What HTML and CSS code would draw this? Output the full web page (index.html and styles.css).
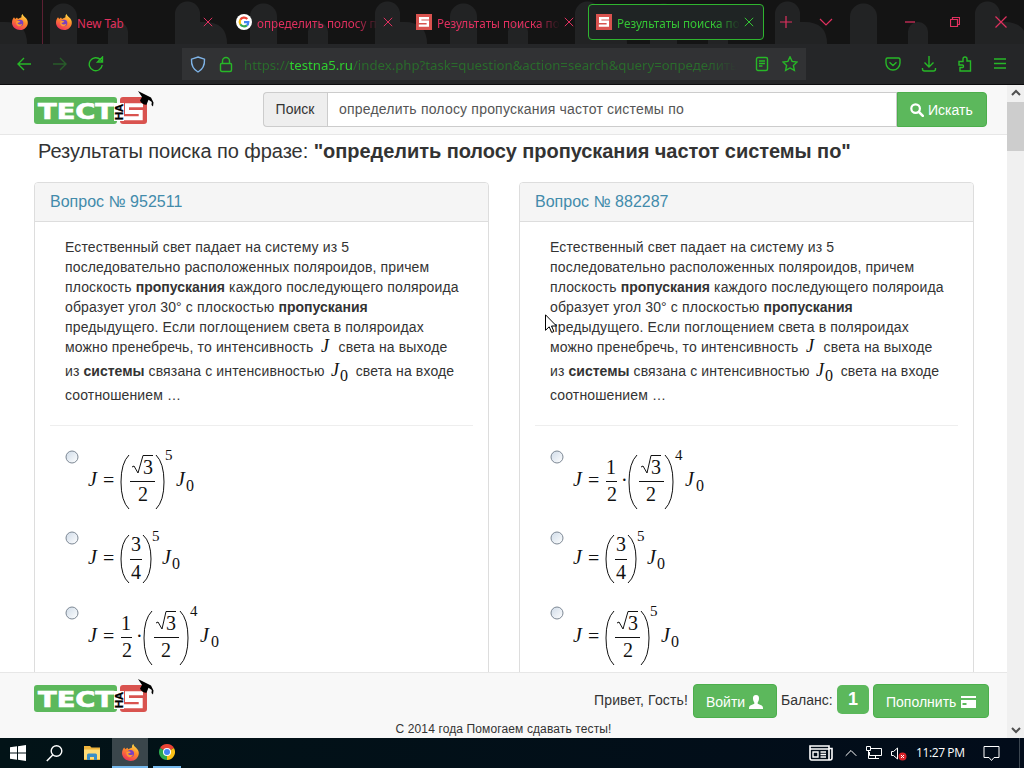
FILE: index.html
```
<!DOCTYPE html>
<html lang="ru">

<head>
  <meta charset="UTF-8">
  <meta name="viewport" content="width=device-width, initial-scale=1.0">
  <title>Результаты поиска</title>
  <link rel="stylesheet" href="styles.css">
</head>

<body>
  <!-- shared icons -->
  <svg class="sprite" width="0" height="0">
    <defs>
      <linearGradient id="fox" x1="0.8" y1="0" x2="0.3" y2="1">
        <stop offset="0" stop-color="#ffe34a"/>
        <stop offset="0.45" stop-color="#ff8a2a"/>
        <stop offset="1" stop-color="#ee2f5c"/>
      </linearGradient>
      <linearGradient id="radio" x1="0" y1="0" x2="1" y2="1">
        <stop offset="0" stop-color="#cfdbe8"/>
        <stop offset="1" stop-color="#ffffff"/>
      </linearGradient>
    </defs>
    <symbol id="firefox" viewBox="0 0 16 16">
      <path d="M2 3.2 3.2 5 5 3.5 6 5C8 3.8 9.3 3.6 9.5 3 9 1.8 10 .6 10.7 0c.2 1.5 1.2 2.2 2.3 3.3C15 5 16 7 15.8 9.2 15.4 13 12.2 16 8.2 16 3.8 16 .3 12.8 0 9 0 6.5.7 4.7 2 3.2z" fill="url(#fox)"/>
      <circle cx="8" cy="9" r="3.3" fill="#7a3fc0"/>
      <path d="M4.2 7.5c1.5-1.2 3-.8 4.2.2-1 .6-1.9 1.2-3 1.2 1 1.7 3.2 2 5 .9-.8 2.1-2.3 2.8-4 2.5C4.6 11.7 3.8 9.5 4.2 7.5z" fill="#ff9a30"/>
    </symbol>
    <symbol id="close" viewBox="0 0 10 10">
      <path d="M.8.8l8.4 8.4M9.2.8.8 9.2" fill="none" stroke="currentColor"/>
    </symbol>
    <symbol id="five" viewBox="0 0 16 16">
      <rect width="16" height="16" fill="#d9534f"/>
      <path d="M13 4.2H4.2v3.6h7.6v3.8H2.8" fill="none" stroke="#fff" stroke-width="2.4"/>
    </symbol>
    <symbol id="logo" viewBox="0 0 122 38">
      <rect x="0" y="6" width="83" height="27" rx="3" fill="#5cb85c"/>
      <rect x="86" y="6" width="27" height="27" rx="3" fill="#d9534f"/>
      <text x="4" y="28" class="logo-name" textLength="76" lengthAdjust="spacingAndGlyphs">ТЕСТ</text>
      <path d="M80 12h10v18H80z" fill="#fff"/>
      <text transform="translate(88.5 29) rotate(-90)" class="logo-on" textLength="16" lengthAdjust="spacingAndGlyphs">НА</text>
      <path d="M109 14.2H93v6.8h13.700v6.200H90" fill="none" stroke="#fff" stroke-width="4"/>
      <path d="M104 0l13 6.5 2.500 5-.5 4-1.500-1.500.3-3-3.300-2.200-2 5c-3 .2-5.500-1.800-6.500-4.300l2-3.500z" fill="#000"/>
    </symbol>
  </svg>

  <div class="tab-bar">
    <svg class="theme" width="1024" height="44">
      <defs>
        <pattern id="humps" width="200" height="44" patternUnits="userSpaceOnUse">
          <path d="M0 44V22h4q23 0 23 22zM50 44V17a13 13 0 0 1 27 0v27zM108 44V32a10 10 0 0 1 20 0v12zM175 44V14a12.5 12.5 0 0 1 25 0v30z" fill="#222324"/>
        </pattern>
      </defs>
      <rect width="1024" height="44" fill="url(#humps)"/>
    </svg>
    <div class="pinned"><svg width="16" height="16"><use href="#firefox"/></svg></div>
    <div class="tab">
      <svg width="16" height="16"><use href="#firefox"/></svg>
      <span class="tab-title">New Tab</span>
      <svg width="10" height="10"><use href="#close"/></svg>
    </div>
    <div class="tab">
      <svg width="16" height="16" viewBox="0 0 16 16">
        <circle cx="8" cy="8" r="8" fill="#fff"/>
        <g fill="none" stroke-width="2.2">
          <path d="M4.3 5.8A4.4 4.4 0 0 1 11.3 4.9" stroke="#ea4335"/>
          <path d="M4.3 10.2a4.4 4.4 0 0 1 0-4.4" stroke="#fbbc05"/>
          <path d="M10.9 11.3a4.4 4.4 0 0 1-6.6-1.1" stroke="#34a853"/>
          <path d="M8 8.2h4.3q0 2-1.4 3.1" stroke="#4285f4"/>
        </g>
      </svg>
      <span class="tab-title fade">определить полосу п</span>
      <svg width="10" height="10"><use href="#close"/></svg>
    </div>
    <div class="tab">
      <svg width="16" height="16"><use href="#five"/></svg>
      <span class="tab-title fade">Результаты поиска по</span>
      <svg width="10" height="10"><use href="#close"/></svg>
    </div>
    <div class="tab active">
      <svg width="16" height="16"><use href="#five"/></svg>
      <span class="tab-title fade">Результаты поиска по</span>
      <svg width="10" height="10"><use href="#close"/></svg>
    </div>
    <div class="tab-tools">
      <svg width="12" height="12" viewBox="0 0 12 12"><path d="M6 0v12M0 6h12"/></svg>
      <svg width="14" height="8" viewBox="0 0 14 8"><path d="M1 1l6 6 6-6"/></svg>
    </div>
    <div class="window-controls">
      <svg width="10" height="10" viewBox="0 0 10 10"><path d="M0 5h10"/></svg>
      <svg width="10" height="10" viewBox="0 0 10 10"><path d="M.5 2.5h7v7h-7zM2.5 2.5v-2h7v7h-2"/></svg>
      <svg width="12" height="12" viewBox="0 0 12 12"><path d="M.5.5l11 11M11.5.5l-11 11"/></svg>
    </div>
  </div>

  <div class="nav-bar">
    <div class="nav-buttons">
      <svg width="16" height="16" viewBox="0 0 16 16"><path d="M15 8H2M8 2 2 8l6 6"/></svg>
      <svg class="dim" width="16" height="16" viewBox="0 0 16 16"><path d="M1 8h13M8 2l6 6-6 6"/></svg>
      <svg width="16" height="16" viewBox="0 0 16 16"><path d="M14.2 9A6.5 6.5 0 1 1 12.5 3.800L14 5.300M14.500 1v5h-5z"/></svg>
    </div>
    <div class="url-bar">
      <svg class="shield" width="16" height="17" viewBox="0 0 16 17"><path d="M8 1l6.5 2.2c.3 5.5-1.500 10-6.500 12.800C3 13.200 1.200 8.700 1.500 3.200z"/></svg>
      <svg width="14" height="17" viewBox="0 0 14 17"><path d="M3.500 7.500V5a3.500 3.500 0 0 1 7 0v2.500M2.500 7.500h9q1 0 1 1V14q0 1.500-1.500 1.500H3q-1.500 0-1.500-1.500V8.500q0-1 1-1z"/></svg>
      <span class="url">https://<b>testna5.ru</b>/index.php?task=question&amp;action=search&amp;query=определить</span>
      <svg width="14" height="16" viewBox="0 0 14 16"><rect x="1.500" y="1.500" width="11" height="13" rx="1.500"/><path d="M4 5h6M4 7.500h6M4 10h3.500"/></svg>
      <svg width="16" height="16" viewBox="0 0 16 16"><path d="M8 .8l2.100 4.600 5 .6-3.700 3.400 1 5L8 12l-4.400 2.400 1-5L.9 6l5-.6z"/></svg>
    </div>
    <div class="nav-tools">
      <svg width="16" height="16" viewBox="0 0 16 16"><path d="M2.500 2h11q1.500 0 1.500 1.500V7a7 7 0 0 1-14 0V3.500Q1 2 2.500 2zM4.500 6.200 8 9.500l3.500-3.300"/></svg>
      <svg width="16" height="16" viewBox="0 0 16 16"><path d="M8 0v11M3.500 6.500 8 11l4.500-4.500M1.500 12v1q0 2 2 2h9q2 0 2-2v-1"/></svg>
      <svg width="16" height="16" viewBox="0 0 16 16"><path d="M2 5.500h4V3q0-2 2-2t2 2v2h3.500v10H3v-3.500h2.500q1 0 1-1.200T5.500 9H2z"/></svg>
      <svg width="14" height="16" viewBox="0 0 14 16"><path d="M1 3h12M1 7.500h12M1 12h12"/></svg>
    </div>
  </div>

  <div class="window">
    <div class="page">
      <header class="site-header">
        <svg class="logo" width="122" height="38"><use href="#logo"/></svg>
        <div class="search">
          <span class="search-label">Поиск</span>
          <span class="search-input">определить полосу пропускания частот системы по</span>
          <span class="btn search-btn">
            <svg width="14" height="14" viewBox="0 0 14 14"><circle cx="5.600" cy="5.600" r="4.300" fill="none" stroke="#fff" stroke-width="2.200"/><path d="M8.800 8.800l4 4" stroke="#fff" stroke-width="2.600" stroke-linecap="round"/></svg>
            Искать
          </span>
        </div>
      </header>

      <main class="results">
        <h1>Результаты поиска по фразе: <b>"определить полосу пропускания частот системы по"</b></h1>
        <div class="panels">
          <section class="panel">
            <h2>Вопрос № 952511</h2>
            <div class="panel-body">
              <p>Естественный свет падает на систему из 5<br>
                последовательно расположенных поляроидов, причем<br>
                плоскость <b>пропускания</b> каждого последующего поляроида<br>
                образует угол 30° с плоскостью <b>пропускания</b><br>
                предыдущего. Если поглощением света в поляроидах<br>
                можно пренебречь, то интенсивность <svg class="var" width="15" height="16"><text x="3" y="13" class="it">J</text></svg> света на выходе</p>
              <p class="tall">из <b>системы</b> связана с интенсивностью <svg class="var" width="21" height="16"><text x="2" y="13" class="it">J</text><text x="11" y="18" class="sub">0</text></svg> света на входе<br>
                соотношением …</p>
              <hr>
              <div class="answer first">
                <svg class="radio" width="14" height="14" viewBox="0 0 14 14"><circle cx="7" cy="7" r="6"/></svg>
                <svg class="formula" width="140" height="64">
                  <text x="2" y="36" class="it">J</text><text x="17" y="37">=</text>
                  <path d="M43 5q-8 8-8 27t8 27M70 5q8 8 8 27t-8 27"/>
                  <path d="M46 17l2-1 4 7 5-17.500h10"/>
                  <text x="57" y="24">3</text><path d="M44 31.500h25"/><text x="52" y="51">2</text>
                  <text x="79" y="10" class="sup">5</text>
                  <text x="90" y="36" class="it">J</text><text x="100" y="41" class="sub">0</text>
                </svg>
              </div>
              <div class="answer second">
                <svg class="radio" width="14" height="14" viewBox="0 0 14 14"><circle cx="7" cy="7" r="6"/></svg>
                <svg class="formula" width="140" height="64">
                  <text x="2" y="33" class="it">J</text><text x="17" y="34">=</text>
                  <path d="M43 4q-8 7-8 24t8 24M57 4q8 7 8 24t-8 24"/>
                  <text x="45" y="20">3</text><path d="M44 28.500h12"/><text x="45" y="48">4</text>
                  <text x="66" y="10" class="sup">5</text>
                  <text x="76" y="33" class="it">J</text><text x="86" y="38" class="sub">0</text>
                </svg>
              </div>
              <div class="answer">
                <svg class="radio" width="14" height="14" viewBox="0 0 14 14"><circle cx="7" cy="7" r="6"/></svg>
                <svg class="formula" width="140" height="64">
                  <text x="2" y="36" class="it">J</text><text x="17" y="37">=</text>
                  <text x="35" y="24">1</text><path d="M35 31.500h11"/><text x="36" y="51">2</text><text x="50" y="37">·</text>
                  <path d="M66 5q-8 8-8 27t8 27M94 5q8 8 8 27t-8 27"/>
                  <path d="M70 17l2-1 4 7 4-17.500h10"/>
                  <text x="80" y="24">3</text><path d="M68 31.500h25"/><text x="75" y="51">2</text>
                  <text x="104" y="10" class="sup">4</text>
                  <text x="114" y="36" class="it">J</text><text x="125" y="41" class="sub">0</text>
                </svg>
              </div>
            </div>
          </section>

          <section class="panel">
            <h2>Вопрос № 882287</h2>
            <div class="panel-body">
              <p>Естественный свет падает на систему из 5<br>
                последовательно расположенных поляроидов, причем<br>
                плоскость <b>пропускания</b> каждого последующего поляроида<br>
                образует угол 30° с плоскостью <b>пропускания</b><br>
                предыдущего. Если поглощением света в поляроидах<br>
                можно пренебречь, то интенсивность <svg class="var" width="15" height="16"><text x="3" y="13" class="it">J</text></svg> света на выходе</p>
              <p class="tall">из <b>системы</b> связана с интенсивностью <svg class="var" width="21" height="16"><text x="2" y="13" class="it">J</text><text x="11" y="18" class="sub">0</text></svg> света на входе<br>
                соотношением …</p>
              <hr>
              <div class="answer first">
                <svg class="radio" width="14" height="14" viewBox="0 0 14 14"><circle cx="7" cy="7" r="6"/></svg>
                <svg class="formula" width="140" height="64">
                  <text x="2" y="36" class="it">J</text><text x="17" y="37">=</text>
                  <text x="35" y="24">1</text><path d="M35 31.500h11"/><text x="36" y="51">2</text><text x="50" y="37">·</text>
                  <path d="M66 5q-8 8-8 27t8 27M94 5q8 8 8 27t-8 27"/>
                  <path d="M70 17l2-1 4 7 4-17.500h10"/>
                  <text x="80" y="24">3</text><path d="M68 31.500h25"/><text x="75" y="51">2</text>
                  <text x="104" y="10" class="sup">4</text>
                  <text x="114" y="36" class="it">J</text><text x="125" y="41" class="sub">0</text>
                </svg>
              </div>
              <div class="answer second">
                <svg class="radio" width="14" height="14" viewBox="0 0 14 14"><circle cx="7" cy="7" r="6"/></svg>
                <svg class="formula" width="140" height="64">
                  <text x="2" y="33" class="it">J</text><text x="17" y="34">=</text>
                  <path d="M43 4q-8 7-8 24t8 24M57 4q8 7 8 24t-8 24"/>
                  <text x="45" y="20">3</text><path d="M44 28.500h12"/><text x="45" y="48">4</text>
                  <text x="66" y="10" class="sup">5</text>
                  <text x="76" y="33" class="it">J</text><text x="86" y="38" class="sub">0</text>
                </svg>
              </div>
              <div class="answer">
                <svg class="radio" width="14" height="14" viewBox="0 0 14 14"><circle cx="7" cy="7" r="6"/></svg>
                <svg class="formula" width="140" height="64">
                  <text x="2" y="36" class="it">J</text><text x="17" y="37">=</text>
                  <path d="M43 5q-8 8-8 27t8 27M70 5q8 8 8 27t-8 27"/>
                  <path d="M46 17l2-1 4 7 5-17.500h10"/>
                  <text x="57" y="24">3</text><path d="M44 31.500h25"/><text x="52" y="51">2</text>
                  <text x="79" y="10" class="sup">5</text>
                  <text x="90" y="36" class="it">J</text><text x="100" y="41" class="sub">0</text>
                </svg>
              </div>
            </div>
          </section>
        </div>
      </main>

      <footer class="site-footer">
        <div class="footer-row">
          <svg class="logo" width="122" height="38"><use href="#logo"/></svg>
          <div class="account">
            <span class="greeting">Привет, Гость!</span>
            <span class="btn login">Войти
              <svg width="14" height="14" viewBox="0 0 14 14"><path d="M7 0c2.300 0 3.200 1.500 3 3.800-.1 1.800-.8 2.900-1.300 3.700v1.300l4 1.700q1.300.7 1.300 2.500v1H0v-1q0-1.800 1.300-2.500l4-1.700V7.500C4.800 6.700 4.100 5.600 4 3.800 3.800 1.500 4.700 0 7 0z" fill="#fff"/></svg>
            </span>
            <span class="balance">Баланс:</span>
            <span class="amount">1</span>
            <span class="btn topup">Пополнить
              <svg width="16" height="12" viewBox="0 0 16 12"><path d="M1 0h15v2H1zM1 4h15v8H1z" fill="#fff"/><path d="M2.500 7h4v2h-4z" fill="#5cb85c"/></svg>
            </span>
          </div>
        </div>
        <p class="copyright">С 2014 года Помогаем сдавать тесты!</p>
      </footer>
    </div>
    <div class="scrollbar">
      <svg width="10" height="7" viewBox="0 0 10 7"><path d="M1 6l4-4 4 4"/></svg>
      <div class="thumb"></div>
      <svg width="10" height="7" viewBox="0 0 10 7"><path d="M1 1l4 4 4-4"/></svg>
    </div>
  </div>

  <div class="taskbar">
    <div class="task"><svg width="16" height="16" viewBox="0 0 16 16"><path d="M0 2.300 7 1.300v6.200H0zM8 1.200 16 0v7.500H8zM0 8.500h7v6.200l-7-1zM8 8.500h8V16l-8-1.200z" fill="#fff"/></svg></div>
    <div class="task"><svg width="17" height="17" viewBox="0 0 17 17"><circle cx="10.500" cy="6" r="5.300" fill="none" stroke="#fff" stroke-width="1.400"/><path d="M6.700 10 .8 16" stroke="#fff" stroke-width="1.500"/></svg></div>
    <div class="task folder-task"><svg width="16" height="14" viewBox="0 0 16 14"><path d="M0 0h6l1.500 1.500H16V14H0z" fill="#eeb43c"/><path d="M0 3.500h16V13H0z" fill="#ffdc76"/><path d="M3 14V9q0-1.500 1.500-1.500h7Q13 7.500 13 9v5h-3v-3H6v3z" fill="#3a8fc8"/></svg></div>
    <div class="task current"><svg width="17" height="17"><use href="#firefox"/></svg></div>
    <div class="task open">
      <svg width="16" height="16" viewBox="0 0 16 16">
        <path d="M8 8 1.070 4A8 8 0 0 1 14.930 4z" fill="#ea4335"/>
        <path d="M8 8 14.930 4A8 8 0 0 1 8 16z" fill="#fbc116"/>
        <path d="M8 8v8A8 8 0 0 1 1.070 4z" fill="#2da94f"/>
        <circle cx="8" cy="8" r="4" fill="#fff"/><circle cx="8" cy="8" r="3" fill="#4285f4"/>
      </svg>
    </div>
    <div class="tray">
      <svg class="news" width="24" height="16" viewBox="0 0 24 16"><path d="M1 1h19v14H2.500Q1 15 1 13zM20 3.500h3V13q0 2-2 2h-1M1 4h19" stroke-width="1.600"/><path d="M4 7h5v5H4zM11.500 7H17M11.500 9.500H17M11.500 12H17" stroke-width="1.400"/></svg>
      <svg width="12" height="8" viewBox="0 0 12 8"><path d="M.7 6.800 6 1.500l5.300 5.300"/></svg>
      <svg width="16" height="14" viewBox="0 0 16 14"><path d="M5 2.500h10.500v7H3.500V6M9.500 9.500v3M5 12.500h8M.5.500h4v4h-4zM2.500 4.500v8H5"/></svg>
      <svg width="16" height="15" viewBox="0 0 16 15"><path d="M.5 5.500h2l4-3.500v11l-4-3.500h-2z"/><circle cx="11.500" cy="10.500" r="4" fill="#d8232a" stroke="none"/><path d="M10 9l3 3M13 9l-3 3"/></svg>
      <span class="clock">11:27 PM</span>
      <svg width="17" height="17" viewBox="0 0 17 17"><path d="M1 1.500h15v11h-5L8.500 15.500 6 12.500H1z"/></svg>
    </div>
  </div>

  <svg class="cursor" width="12" height="20" viewBox="0 0 12 20"><path d="M.5.8v15.500l3.700-3.500 2.500 5.700 2.200-1-2.400-5.500h5z" fill="#fff" stroke="#000"/></svg>
</body>

</html>
```
FILE: styles.css
```
* {
  margin: 0;
  padding: 0;
  box-sizing: border-box;
}

body {
  width: 1024px;
  height: 768px;
  overflow: hidden;
  display: flex;
  flex-direction: column;
  font-family: "Liberation Sans", Arial, sans-serif;
  font-size: 14px;
  line-height: 20px;
  color: #333;
  white-space: nowrap;
}

svg {
  flex: none;
}

.sprite {
  position: absolute;
}

/* Browser tabs */
.tab-bar {
  position: relative;
  height: 44px;
  display: flex;
  align-items: center;
  background: #141414;
  color: #e0305f;
  font-family: "Noto Sans", "Open Sans", sans-serif;
  font-size: 11.7px;
}

.theme {
  position: absolute;
  inset: 0;
}

.tab-bar > div {
  position: relative;
}

.pinned {
  width: 43px;
  height: 44px;
  padding: 14px 0 0 12px;
  margin-right: 5px;
  border-right: 1px solid #5c2033;
}

.tab {
  width: 176px;
  height: 36px;
  margin-right: 4px;
  padding: 0 10px 0 7px;
  display: flex;
  align-items: center;
  border: 1px solid transparent;
  border-radius: 4px;
}

.tab-title {
  flex: 1;
  margin: 2px 4px 0 5px;
}

.fade {
  -webkit-mask-image: linear-gradient(to left, transparent, #000 24px);
  mask-image: linear-gradient(to left, transparent, #000 24px);
}

.tab.active {
  background: #1f2424;
  border-color: #2fb52f;
  color: #35c435;
}

.tab-tools {
  display: flex;
  align-items: center;
  gap: 27px;
  margin-left: 12px;
}

.tab-tools path,
.window-controls path {
  fill: none;
  stroke: #e0305f;
  stroke-width: 1.2;
}

.window-controls {
  display: flex;
  align-items: center;
  gap: 35px;
  margin-left: auto;
  padding-right: 17px;
}

/* Address bar */
.nav-bar {
  height: 41px;
  display: flex;
  align-items: center;
  background: #252628;
  border-bottom: 1px solid #0c0c0e;
}

.nav-bar svg {
  fill: none;
  stroke: #27b827;
  stroke-width: 1.4;
}

.nav-bar .dim {
  stroke: #285c2a;
}

.nav-bar .shield {
  stroke: #7fb4e8;
}

.nav-buttons {
  width: 182px;
  padding-left: 16px;
  display: flex;
  gap: 20px;
}

.url-bar {
  width: 624px;
  height: 32px;
  padding: 0 8px;
  display: flex;
  align-items: center;
  background: #313234;
}

.url-bar svg:nth-child(2) {
  margin-left: 13px;
}

.url {
  width: 493px;
  margin: 2px 18px 0 11px;
  font-family: "Noto Sans", "Open Sans", sans-serif;
  font-size: 13.2px;
  color: #2a6b2c;
  -webkit-mask-image: linear-gradient(to left, transparent, #000 30px);
  mask-image: linear-gradient(to left, transparent, #000 30px);
}

.url b {
  font-weight: normal;
  color: #2fd02f;
}

.url-bar svg:last-child {
  margin-left: 13px;
}

.nav-tools {
  margin-left: auto;
  padding-right: 17px;
  display: flex;
  gap: 20px;
}

/* Page */
.window {
  height: 653px;
  display: flex;
}

.page {
  width: 1007px;
  display: flex;
  flex-direction: column;
  background: #fff;
}

.site-header {
  height: 50px;
  flex: none;
  display: flex;
  background: #f8f8f8;
  border-bottom: 1px solid #e7e7e7;
}

.logo {
  margin: 6px 0 0 34px;
}

.logo-name {
  font: bold 22px "DejaVu Sans", sans-serif;
  fill: #fff;
  stroke: #fff;
  stroke-width: 0.7px;
}

.logo-on {
  font: bold 10px "Liberation Sans", sans-serif;
  fill: #000;
  stroke: #000;
  stroke-width: 0.3px;
}

.search {
  display: flex;
  width: 724px;
  height: 35px;
  margin: 7px 0 0 107px;
  line-height: 33px;
}

.search-label {
  width: 64px;
  padding-right: 1px;
  border: 1px solid #ccc;
  border-right: 0;
  border-radius: 4px 0 0 4px;
  background: #eee;
  text-align: center;
}

.search-input {
  flex: 1;
  padding-left: 11px;
  border: 1px solid #ccc;
  background: #fff;
  color: #555;
  letter-spacing: 0.2px;
}

.btn {
  display: flex;
  align-items: center;
  background: #5cb85c;
  border: 1px solid #4cae4c;
  border-radius: 4px;
  color: #fff;
}

.search-btn {
  width: 90px;
  padding: 1px 0 0 12px;
  gap: 4px;
  border-radius: 0 4px 4px 0;
}

.results {
  flex: 1;
  min-height: 0;
  overflow: hidden;
}

h1 {
  margin: 4px 0 0 38px;
  font-size: 20px;
  font-weight: normal;
  line-height: 24px;
  letter-spacing: -0.05px;
}

.panels {
  display: flex;
  gap: 30px;
  padding: 19px 0 0 34px;
}

.panel {
  width: 455px;
  height: 600px;
  border: 1px solid #ddd;
  border-radius: 4px;
}

.panel h2 {
  height: 39px;
  padding-left: 15px;
  background: #f5f5f5;
  border-bottom: 1px solid #ddd;
  border-radius: 3px 3px 0 0;
  color: #428bab;
  font-size: 16px;
  font-weight: normal;
  line-height: 37px;
}

.panel-body {
  padding: 15px 15px 0;
}

.panel p {
  padding-left: 15px;
  letter-spacing: 0.14px;
}

.panel p b {
  letter-spacing: 0;
}

.panel .tall {
  line-height: 24px;
  margin-top: 2px;
}

hr {
  margin: 18px 0 24px;
  border: 0;
  border-top: 1px solid #eee;
}

.var {
  overflow: visible;
  margin: 0 2px -3px 0;
}

.var text,
.formula text {
  font-family: "Liberation Serif", serif;
  font-size: 20px;
  fill: #111;
}

.var .it,
.formula .it {
  font-style: italic;
}

.var .it {
  font-size: 18px;
}

.var .sub,
.formula .sub {
  font-size: 16px;
}

.formula .sup {
  font-size: 15px;
}

.answer {
  display: flex;
  height: 64px;
  padding-left: 15px;
}

.answer.first {
  height: 81px;
}

.answer.second {
  height: 75px;
}

.formula {
  margin-left: 7px;
  overflow: visible;
}

.formula path {
  fill: none;
  stroke: #111;
}

.radio circle {
  fill: url(#radio);
  stroke: #7d8894;
}

/* Footer */
.site-footer {
  height: 66px;
  flex: none;
  background: #f8f8f8;
  border-top: 1px solid #e7e7e7;
}

.footer-row {
  display: flex;
  height: 46px;
}

.account {
  width: 395px;
  height: 34px;
  margin: 11px 18px 0 auto;
  display: flex;
  align-items: center;
}

.greeting {
  width: 99px;
  margin-top: -3px;
  letter-spacing: 0.15px;
}

.login {
  width: 84px;
  height: 34px;
  padding: 1px 0 0 12px;
  gap: 4px;
}

.balance {
  width: 60px;
  padding-left: 4px;
  margin-top: -3px;
}

.amount {
  width: 32px;
  height: 29px;
  margin: -4px 4px 0 0;
  border-radius: 5px;
  background: #5cb85c;
  color: #fff;
  font-size: 18px;
  font-weight: bold;
  line-height: 28px;
  text-align: center;
}

.topup {
  width: 116px;
  height: 34px;
  padding: 1px 0 0 12px;
  gap: 4px;
}

.copyright {
  font-size: 12px;
  line-height: 20px;
  letter-spacing: 0.12px;
  text-align: center;
}

/* Scrollbar */
.scrollbar {
  width: 17px;
  display: flex;
  flex-direction: column;
  align-items: center;
  padding: 4px 0;
  background: #f0f0f0;
}

.scrollbar path {
  fill: none;
  stroke: #505050;
  stroke-width: 2;
}

.thumb {
  width: 17px;
  height: 49px;
  margin: 6px 0 auto;
  background: #cdcdcd;
}

/* Taskbar */
.taskbar {
  height: 30px;
  display: flex;
  align-items: center;
  background: linear-gradient(to right, #021317, #020c1a);
  color: #fff;
}

.task {
  width: 36px;
  height: 30px;
  display: flex;
  align-items: center;
  justify-content: center;
}

.folder-task {
  width: 40px;
}

.task.current {
  background: #3a464b;
  border-bottom: 2px solid #76b9ed;
}

.task.open {
  width: 28px;
  margin-left: 5px;
  border-bottom: 2px solid #76b9ed;
}

.tray {
  display: flex;
  align-items: center;
  gap: 9px;
  height: 30px;
  margin-left: auto;
  margin-right: 4px;
  padding-right: 19px;
  border-right: 1px solid #3c4650;
}

.tray svg {
  fill: none;
  stroke: #fff;
}

.news {
  margin-right: 3px;
}

.clock {
  width: 58px;
  font-family: "Open Sans", "Noto Sans", sans-serif;
  font-size: 12px;
  letter-spacing: -0.4px;
}

.cursor {
  position: absolute;
  left: 545px;
  top: 314px;
}
```
